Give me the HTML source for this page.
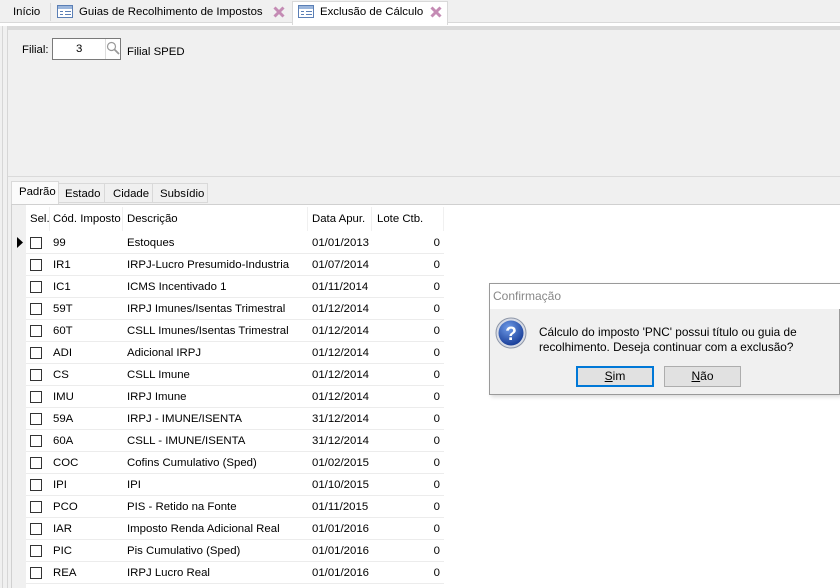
<!DOCTYPE html>
<html><head><meta charset="utf-8"><style>
*{margin:0;padding:0;box-sizing:border-box}
body{width:840px;height:588px;overflow:hidden;background:#f0f0f0;font-family:"Liberation Sans",sans-serif;font-size:11.4px;color:#000;position:relative}
.a{position:absolute;white-space:nowrap}
.ic{position:absolute;width:16px;height:13px;border:1px solid #5b7fb5;background:#fff}
.ic:before{content:"";position:absolute;left:0;top:0;right:0;height:3px;background:#9bb6dc}
.ic i{position:absolute;height:1px;background:#5b7fb5}
.x{position:absolute;width:12px;height:12px}
.row{position:absolute;left:26px;width:418px;height:22px;border-bottom:1px solid #ececec}
.cb{position:absolute;left:4px;top:5px;width:12px;height:12px;border:1px solid #333;background:#fff}
.c{position:absolute;top:5px}
.btn{position:absolute;height:21px;background:#e1e1e1;border:1px solid #adadad;text-align:center;line-height:19px;font-size:12px}
</style></head><body>
<div class="a" style="left:0;top:0;width:840px;height:22px;background:#f0f0f0"></div>
<div class="a" style="left:13px;top:6px">Início</div>
<div class="a" style="left:50px;top:3px;width:1px;height:18px;background:#d9d9d9"></div>
<div class="ic" style="left:57px;top:5px"><i style="left:2px;top:5px;width:3px"></i><i style="left:7px;top:5px;width:6px"></i><i style="left:2px;top:8px;width:3px"></i><i style="left:7px;top:8px;width:6px"></i></div>
<div class="a" style="left:79px;top:6px">Guias de Recolhimento de Impostos</div>
<svg class="x" style="left:273px;top:6px" viewBox="0 0 12 12"><path d="M1.5 1.5L10.5 10.5M10.5 1.5L1.5 10.5" stroke="#c48bb4" stroke-width="3"/></svg>
<div class="a" style="left:292px;top:1px;width:156px;height:24px;background:#fff;border:1px solid #d9d9d9;border-bottom:none"></div>
<div class="ic" style="left:298px;top:5px"><i style="left:2px;top:5px;width:3px"></i><i style="left:7px;top:5px;width:6px"></i><i style="left:2px;top:8px;width:3px"></i><i style="left:7px;top:8px;width:6px"></i></div>
<div class="a" style="left:320px;top:6px">Exclusão de Cálculo</div>
<svg class="x" style="left:430px;top:6px" viewBox="0 0 12 12"><path d="M1.5 1.5L10.5 10.5M10.5 1.5L1.5 10.5" stroke="#c48bb4" stroke-width="3"/></svg>
<div class="a" style="left:0;top:22px;width:292px;height:1px;background:#d9d9d9"></div>
<div class="a" style="left:448px;top:22px;width:392px;height:1px;background:#d9d9d9"></div>
<div class="a" style="left:0;top:23px;width:840px;height:3px;background:#fff"></div>
<div class="a" style="left:292px;top:23px;width:1px;height:2px;background:#d9d9d9"></div>
<div class="a" style="left:447px;top:23px;width:1px;height:2px;background:#d9d9d9"></div>
<div class="a" style="left:7px;top:26px;width:833px;height:4px;background:#dadada"></div>
<div class="a" style="left:2px;top:26px;width:1px;height:562px;background:#d6d6d6"></div>
<div class="a" style="left:7px;top:26px;width:1px;height:562px;background:#d6d6d6"></div>
<div class="a" style="left:22px;top:44px">Filial:</div>
<div class="a" style="left:52px;top:38px;width:69px;height:22px;background:#fff;border:1px solid #7a7a7a"></div>
<div class="a" style="left:76px;top:43px">3</div>
<div class="a" style="left:105px;top:39px;width:1px;height:20px;background:#ddd"></div>
<svg class="a" style="left:106px;top:41px" width="14" height="15" viewBox="0 0 14 15"><circle cx="5.5" cy="5.5" r="4" fill="none" stroke="#999" stroke-width="1.2"/><path d="M8.5 8.5L13 13" stroke="#999" stroke-width="1.8"/></svg>
<div class="a" style="left:127px;top:46px">Filial SPED</div>
<div class="a" style="left:8px;top:176px;width:832px;height:1px;background:#dadada"></div>
<div class="a" style="left:11px;top:181px;width:48px;height:23px;background:#fbfbfb;border:1px solid #d9d9d9;border-bottom:none"></div>
<div class="a" style="left:19px;top:186px">Padrão</div>
<div class="a" style="left:59px;top:183px;width:46px;height:20px;border:1px solid #d9d9d9;border-left:none"></div>
<div class="a" style="left:65px;top:188px">Estado</div>
<div class="a" style="left:105px;top:183px;width:48px;height:20px;border:1px solid #d9d9d9;border-left:none"></div>
<div class="a" style="left:113px;top:188px">Cidade</div>
<div class="a" style="left:153px;top:183px;width:55px;height:20px;border:1px solid #d9d9d9;border-left:none"></div>
<div class="a" style="left:160px;top:188px">Subsídio</div>
<div class="a" style="left:11px;top:204px;width:829px;height:384px;background:#fff;border:1px solid #d0d0d0;border-right:none;border-bottom:none"></div>
<div class="a" style="left:12px;top:205px;width:14px;height:383px;background:#f0f0f0"></div>
<div class="a" style="left:30px;top:213px">Sel.</div>
<div class="a" style="left:49px;top:207px;width:1px;height:24px;background:#f0f0f0"></div>
<div class="a" style="left:53px;top:213px">Cód. Imposto</div>
<div class="a" style="left:122px;top:207px;width:1px;height:24px;background:#f0f0f0"></div>
<div class="a" style="left:127px;top:213px">Descrição</div>
<div class="a" style="left:307px;top:207px;width:1px;height:24px;background:#f0f0f0"></div>
<div class="a" style="left:312px;top:213px">Data Apur.</div>
<div class="a" style="left:371px;top:207px;width:1px;height:24px;background:#f0f0f0"></div>
<div class="a" style="left:377px;top:213px">Lote Ctb.</div>
<div class="a" style="left:443px;top:207px;width:1px;height:24px;background:#f0f0f0"></div>
<svg class="a" style="left:17px;top:237px" width="6" height="11"><path d="M0 0L6 5.5L0 11Z" fill="#000"/></svg>
<div id="rows"></div>
<script>
var d=[["99","Estoques","01/01/2013"],["IR1","IRPJ-Lucro Presumido-Industria","01/07/2014"],["IC1","ICMS Incentivado 1","01/11/2014"],["59T","IRPJ Imunes/Isentas Trimestral","01/12/2014"],["60T","CSLL Imunes/Isentas Trimestral","01/12/2014"],["ADI","Adicional IRPJ","01/12/2014"],["CS","CSLL Imune","01/12/2014"],["IMU","IRPJ Imune","01/12/2014"],["59A","IRPJ - IMUNE/ISENTA","31/12/2014"],["60A","CSLL - IMUNE/ISENTA","31/12/2014"],["COC","Cofins Cumulativo (Sped)","01/02/2015"],["IPI","IPI","01/10/2015"],["PCO","PIS - Retido na Fonte","01/11/2015"],["IAR","Imposto Renda Adicional Real","01/01/2016"],["PIC","Pis Cumulativo (Sped)","01/01/2016"],["REA","IRPJ Lucro Real","01/01/2016"]];
var h="";d.forEach(function(r,i){h+='<div class="row" style="top:'+(232+i*22)+'px"><div class="cb"></div><div class="c" style="left:27px">'+r[0]+'</div><div class="c" style="left:101px">'+r[1]+'</div><div class="c" style="left:286px">'+r[2]+'</div><div class="c" style="right:4px">0</div></div>';});
document.getElementById("rows").innerHTML=h;
</script>
<div class="a" style="left:489px;top:283px;width:351px;height:112px;background:#f0f0f0;border:1px solid #9a9a9a;box-shadow:2px 2px 4px rgba(0,0,0,.15)"></div>
<div class="a" style="left:490px;top:284px;width:350px;height:25px;background:#fff"></div>
<div class="a" style="left:493px;top:289px;color:#888;font-size:12px">Confirmação</div>
<svg class="a" style="left:495px;top:317px" width="32" height="32" viewBox="0 0 32 32"><defs><radialGradient id="g" cx="40%" cy="30%" r="70%"><stop offset="0" stop-color="#6f9be8"/><stop offset="1" stop-color="#1a3f99"/></radialGradient></defs><circle cx="16" cy="16" r="15" fill="#d8dce6" stroke="#8e97a8"/><circle cx="16" cy="16" r="12.5" fill="url(#g)"/><text x="16" y="23" text-anchor="middle" font-family="Liberation Sans" font-weight="bold" font-size="19" fill="#fff">?</text></svg>
<div class="a" style="left:539px;top:325px;line-height:15px;font-size:11.8px">Cálculo do imposto 'PNC' possui título ou guia de<br>recolhimento. Deseja continuar com a exclusão?</div>
<div class="btn" style="left:576px;top:366px;width:78px;border:2px solid #0078d7;line-height:17px"><u>S</u>im</div>
<div class="btn" style="left:664px;top:366px;width:77px"><u>N</u>ão</div>
</body></html>
